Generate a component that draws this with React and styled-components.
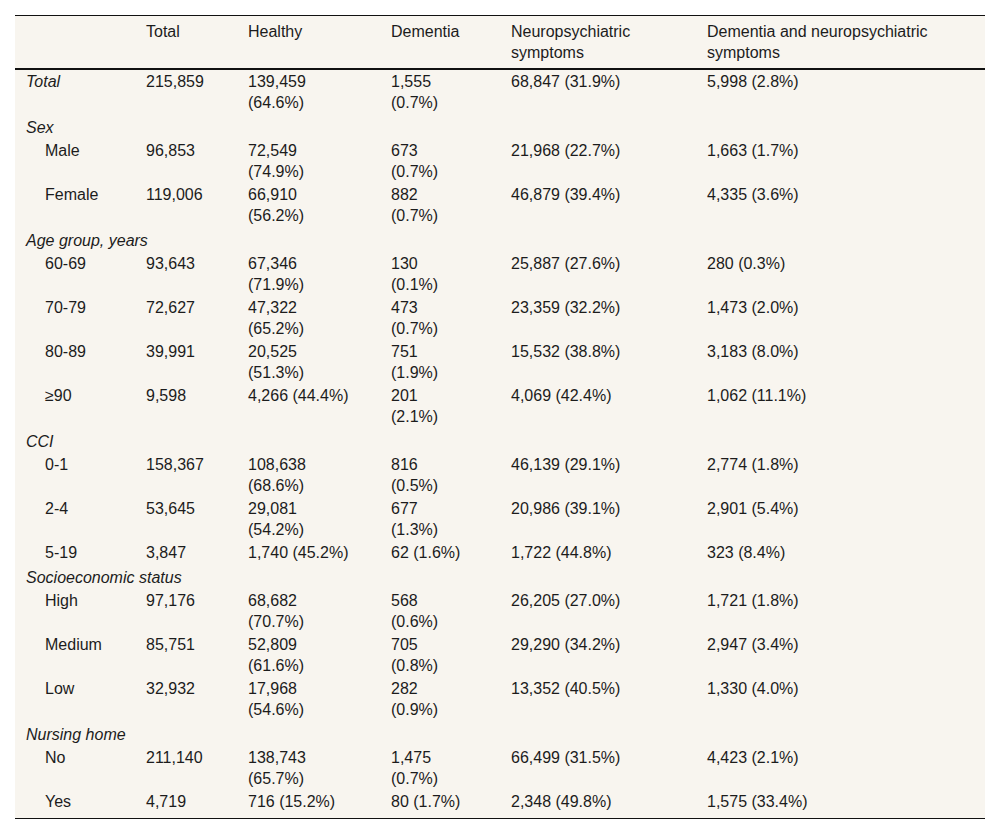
import React from 'react'
import styled, { createGlobalStyle } from 'styled-components'

const GlobalStyle = createGlobalStyle`
  body {
    margin: 0;
    background: #fff;
    font-family: "Liberation Sans", Arial, sans-serif;
    color: #1c1c1c;
  }
`

const Page = styled.div`
  padding: 15px;
`

const Table = styled.table`
  width: 970px;
  table-layout: fixed;
  border-collapse: collapse;
  background: #f8f5ef;
  font-size: 16px;
  line-height: 21px;
  border-top: 1px solid #111;
  border-bottom: 1px solid #111;
`

const HeadRow = styled.tr`
  border-bottom: 2px solid #111;
`

const Th = styled.th`
  font-weight: normal;
  text-align: left;
  vertical-align: top;
  padding: 5px ${p => p.$pr || 8}px 5px 11px;
`

const Td = styled.td`
  vertical-align: top;
  text-align: left;
  padding: 1px ${p => p.$pr || 8}px ${p => (p.$last ? 6 : 1)}px 11px;
`

const Label = styled(Td)`
  padding-left: ${p => (p.$indent ? 30 : 11)}px;
  font-style: ${p => (p.$italic ? 'italic' : 'normal')};
`

const SectionCell = styled.td`
  font-style: italic;
  padding: 3px 8px 1px 11px;
  white-space: nowrap;
`

const columns = [
  { width: 120, label: '' },
  { width: 102, label: 'Total' },
  { width: 143, label: 'Healthy', pr: 27 },
  { width: 120, label: 'Dementia', pr: 35 },
  { width: 196, label: 'Neuropsychiatric symptoms' },
  { width: 289, label: 'Dementia and neuropsychiatric symptoms' },
]

const rows = [
  { label: 'Total', italic: true, values: ['215,859', '139,459 (64.6%)', '1,555 (0.7%)', '68,847 (31.9%)', '5,998 (2.8%)'] },
  { section: 'Sex' },
  { label: 'Male', values: ['96,853', '72,549 (74.9%)', '673 (0.7%)', '21,968 (22.7%)', '1,663 (1.7%)'] },
  { label: 'Female', values: ['119,006', '66,910 (56.2%)', '882 (0.7%)', '46,879 (39.4%)', '4,335 (3.6%)'] },
  { section: 'Age group, years' },
  { label: '60-69', values: ['93,643', '67,346 (71.9%)', '130 (0.1%)', '25,887 (27.6%)', '280 (0.3%)'] },
  { label: '70-79', values: ['72,627', '47,322 (65.2%)', '473 (0.7%)', '23,359 (32.2%)', '1,473 (2.0%)'] },
  { label: '80-89', values: ['39,991', '20,525 (51.3%)', '751 (1.9%)', '15,532 (38.8%)', '3,183 (8.0%)'] },
  { label: '≥90', values: ['9,598', '4,266 (44.4%)', '201 (2.1%)', '4,069 (42.4%)', '1,062 (11.1%)'] },
  { section: 'CCI' },
  { label: '0-1', values: ['158,367', '108,638 (68.6%)', '816 (0.5%)', '46,139 (29.1%)', '2,774 (1.8%)'] },
  { label: '2-4', values: ['53,645', '29,081 (54.2%)', '677 (1.3%)', '20,986 (39.1%)', '2,901 (5.4%)'] },
  { label: '5-19', values: ['3,847', '1,740 (45.2%)', '62 (1.6%)', '1,722 (44.8%)', '323 (8.4%)'] },
  { section: 'Socioeconomic status' },
  { label: 'High', values: ['97,176', '68,682 (70.7%)', '568 (0.6%)', '26,205 (27.0%)', '1,721 (1.8%)'] },
  { label: 'Medium', values: ['85,751', '52,809 (61.6%)', '705 (0.8%)', '29,290 (34.2%)', '2,947 (3.4%)'] },
  { label: 'Low', values: ['32,932', '17,968 (54.6%)', '282 (0.9%)', '13,352 (40.5%)', '1,330 (4.0%)'] },
  { section: 'Nursing home' },
  { label: 'No', values: ['211,140', '138,743 (65.7%)', '1,475 (0.7%)', '66,499 (31.5%)', '4,423 (2.1%)'] },
  { label: 'Yes', values: ['4,719', '716 (15.2%)', '80 (1.7%)', '2,348 (49.8%)', '1,575 (33.4%)'] },
]

const App = () => {
  return (
    <Page>
      <GlobalStyle />
      <Table>
        <colgroup>
          {columns.map((c, i) => <col key={i} style={{ width: c.width }} />)}
        </colgroup>
        <thead>
          <HeadRow>
            {columns.map((c, i) => <Th key={i} $pr={c.pr}>{c.label}</Th>)}
          </HeadRow>
        </thead>
        <tbody>
          {rows.map((r, i) => {
            if (r.section) {
              return (
                <tr key={i}>
                  <SectionCell colSpan={6}>{r.section}</SectionCell>
                </tr>
              )
            }
            const last = i === rows.length - 1
            return (
              <tr key={i}>
                <Label $indent={!r.italic} $italic={r.italic} $last={last}>{r.label}</Label>
                {r.values.map((v, j) => (
                  <Td key={j} $pr={columns[j + 1].pr} $last={last}>{v}</Td>
                ))}
              </tr>
            )
          })}
        </tbody>
      </Table>
    </Page>
  )
}

export default App
